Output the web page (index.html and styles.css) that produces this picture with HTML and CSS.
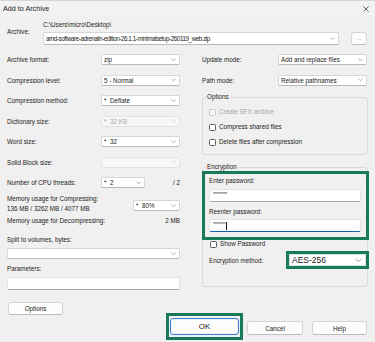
FILE: index.html
```html
<!DOCTYPE html>
<html>
<head>
<meta charset="utf-8">
<link rel="stylesheet" href="styles.css">
</head>
<body>
<div class="window">
  <div class="titlebar">
    <span class="title">Add to Archive</span>
    <svg class="close" viewBox="0 0 6 6"><path d="M0.3 0.3 L5.7 5.7 M5.7 0.3 L0.3 5.7" stroke="#2b2b2b" stroke-width="0.7" fill="none"/></svg>
  </div>

  <div class="archive-row">
    <span class="archive-lbl">Archive:</span>
    <div class="archive-main">
      <div class="path">C:\Users\micro\Desktop\</div>
      <div class="combo big"><span class="val fname">amd-software-adrenalin-edition-26.1.1-minimalsetup-260119_web.zip</span><svg class="chev" viewBox="0 0 6 4"><path d="M0.5 0.8 L3 3.2 L5.5 0.8" fill="none" stroke="#6b6b6b" stroke-width="0.7"/></svg></div>
    </div>
    <div class="btn browse">...</div>
  </div>

  <div class="columns">
    <div class="col left">
      <div class="row"><span class="lbl">Archive format:</span><div class="combo w79"><span>zip</span><svg class="chev" viewBox="0 0 6 4"><path d="M0.5 0.8 L3 3.2 L5.5 0.8" fill="none" stroke="#6b6b6b" stroke-width="0.7"/></svg></div></div>
      <div class="row"><span class="lbl">Compression level:</span><div class="combo w79"><span>5 - Normal</span><svg class="chev" viewBox="0 0 6 4"><path d="M0.5 0.8 L3 3.2 L5.5 0.8" fill="none" stroke="#6b6b6b" stroke-width="0.7"/></svg></div></div>
      <div class="row"><span class="lbl">Compression method:</span><div class="combo w79"><span>*&nbsp; Deflate</span><svg class="chev" viewBox="0 0 6 4"><path d="M0.5 0.8 L3 3.2 L5.5 0.8" fill="none" stroke="#6b6b6b" stroke-width="0.7"/></svg></div></div>
      <div class="row"><span class="lbl">Dictionary size:</span><div class="combo w79 disabled"><span>*&nbsp; 32 KB</span><svg class="chev" viewBox="0 0 6 4"><path d="M0.5 0.8 L3 3.2 L5.5 0.8" fill="none" stroke="#c4c4c4" stroke-width="0.7"/></svg></div></div>
      <div class="row"><span class="lbl">Word size:</span><div class="combo w79"><span>*&nbsp; 32</span><svg class="chev" viewBox="0 0 6 4"><path d="M0.5 0.8 L3 3.2 L5.5 0.8" fill="none" stroke="#6b6b6b" stroke-width="0.7"/></svg></div></div>
      <div class="row"><span class="lbl">Solid Block size:</span><div class="combo w79 disabled"><span></span><svg class="chev" viewBox="0 0 6 4"><path d="M0.5 0.8 L3 3.2 L5.5 0.8" fill="none" stroke="#c4c4c4" stroke-width="0.7"/></svg></div></div>
      <div class="row"><span class="lbl">Number of CPU threads:</span><div class="combo w44"><span>*&nbsp; 2</span><svg class="chev" viewBox="0 0 6 4"><path d="M0.5 0.8 L3 3.2 L5.5 0.8" fill="none" stroke="#6b6b6b" stroke-width="0.7"/></svg></div><span class="right-txt">/ 2</span></div>
      <div class="mem">
        <div class="mem-text">Memory usage for Compressing:<br>136 MB / 3262 MB / 4077 MB</div>
        <div class="combo w47"><span>*&nbsp; 80%</span><svg class="chev" viewBox="0 0 6 4"><path d="M0.5 0.8 L3 3.2 L5.5 0.8" fill="none" stroke="#6b6b6b" stroke-width="0.7"/></svg></div>
      </div>
      <div class="decomp"><span>Memory usage for Decompressing:</span><span>2 MB</span></div>
      <div class="txt split-lbl">Split to volumes, bytes:</div>
      <div class="combo full split-combo"><span></span><svg class="chev" viewBox="0 0 6 4"><path d="M0.5 0.8 L3 3.2 L5.5 0.8" fill="none" stroke="#6b6b6b" stroke-width="0.7"/></svg></div>
      <div class="txt params-lbl">Parameters:</div>
      <div class="input params"></div>
    </div>

    <div class="col right">
      <div class="row"><span class="lbl r">Update mode:</span><div class="combo w89"><span>Add and replace files</span><svg class="chev" viewBox="0 0 6 4"><path d="M0.5 0.8 L3 3.2 L5.5 0.8" fill="none" stroke="#6b6b6b" stroke-width="0.7"/></svg></div></div>
      <div class="row"><span class="lbl r">Path mode:</span><div class="combo w89"><span>Relative pathnames</span><svg class="chev" viewBox="0 0 6 4"><path d="M0.5 0.8 L3 3.2 L5.5 0.8" fill="none" stroke="#6b6b6b" stroke-width="0.7"/></svg></div></div>

      <fieldset class="group options">
        <legend>Options</legend>
        <div class="opt-body">
          <div class="check dis"><span class="cb"></span>Create SFX archive</div>
          <div class="check"><span class="cb"></span>Compress shared files</div>
          <div class="check"><span class="cb"></span>Delete files after compression</div>
        </div>
      </fieldset>

      <fieldset class="group encryption">
        <legend>Encryption</legend>
        <div class="hl pw-box">
          <div class="txt">Enter password:</div>
          <div class="input pw"><span class="stars">********</span></div>
          <div class="txt pw2-lbl">Reenter password:</div>
          <div class="input pw focused"><span class="stars">*******</span><span class="caret"></span></div>
        </div>
        <div class="check show-pw"><span class="cb"></span>Show Password</div>
        <div class="enc-row">
          <span class="enc-lbl">Encryption method:</span>
          <div class="hl enc-wrap">
            <div class="combo enc"><span>AES-256</span><svg class="chev big" viewBox="0 0 6 4"><path d="M0.5 0.8 L3 3.2 L5.5 0.8" fill="none" stroke="#6b6b6b" stroke-width="0.6"/></svg></div>
          </div>
        </div>
      </fieldset>
    </div>
  </div>

  <div class="bottom">
    <div class="btn btn-options">Options</div>
    <div class="hl ok-wrap"><div class="btn btn-ok">OK</div></div>
    <div class="btn btn-cancel">Cancel</div>
    <div class="btn btn-help">Help</div>
  </div>
</div>
</body>
</html>
```

FILE: styles.css
```css
* { box-sizing: border-box; }
html, body { margin: 0; padding: 0; }
body {
  width: 375px;
  height: 342px;
  overflow: hidden;
  background: #f0f0f0;
  font-family: "Liberation Sans", Arial, sans-serif;
  font-size: 6.3px;
  color: #1b1b1b;
}
.window {
  width: 375px;
  height: 342px;
  background: #f0f0f0;
  border-top: 1px solid #d6d6d6;
}
.titlebar {
  height: 15px;
  display: flex;
  align-items: center;
  justify-content: space-between;
  padding: 0 6px 0 3px;
  background: #f2f2f2;
}
.title { font-size: 7.2px; color: #1b1b1b; }
.close { width: 6px; height: 6px; display: block; }

.archive-row {
  display: flex;
  margin-top: 4px;
  padding: 0 8px 0 7px;
}
.archive-lbl { width: 36px; margin-top: 8px; line-height: 8px; }
.archive-main { width: 296px; }
.path { line-height: 10px; margin-bottom: 2px; }
.fname { letter-spacing: -0.45px; }

.combo {
  display: flex;
  align-items: center;
  justify-content: space-between;
  background: #ffffff;
  border: 1px solid #d6d6d6;
  border-bottom-color: #b8b8b8;
  border-radius: 2px;
  padding: 0 3px 0 2px;
  height: 11px;
  white-space: nowrap;
  overflow: hidden;
}
.combo.big { height: 13px; }
.combo.disabled {
  background: #f7f7f7;
  border-color: #e2e2e2;
  color: #a6a6a6;
}
.chev { width: 5px; height: 3.4px; display: block; flex: none; }
.chev.big { width: 7px; height: 4.6px; }

.btn {
  display: flex;
  align-items: center;
  justify-content: center;
  background: #fdfdfd;
  border: 1px solid #d4d4d4;
  border-bottom-color: #bdbdbd;
  border-radius: 3px;
  color: #1b1b1b;
}
.browse {
  width: 16px;
  height: 13px;
  margin-left: 12px;
  margin-top: 12px;
  color: #8a8a8a;
  font-size: 6px;
  line-height: 6px;
  padding-bottom: 2px;
}

.columns {
  display: flex;
  margin-top: 9px;
  padding-left: 7px;
}
.col { display: flex; flex-direction: column; }
.left { width: 173px; }
.right { width: 166px; margin-left: 22px; }

.row {
  display: flex;
  align-items: center;
  height: 11px;
}
.row + .row { margin-top: 9.5px; }
.lbl { width: 94px; flex: none; }
.lbl.r { width: 76px; }
.dis { color: #a6a6a6; }
.w79 { width: 79px; }
.w44 { width: 44px; }
.w47 { width: 47px; }
.w89 { width: 89px; }
.right-txt { margin-left: auto; }

.mem {
  display: flex;
  justify-content: space-between;
  align-items: flex-start;
  margin-top: 6px;
}
.mem-text { line-height: 10px; }
.mem .combo { margin-top: 6px; }
.decomp {
  display: flex;
  justify-content: space-between;
  line-height: 10px;
  margin-top: 2px;
}
.txt { line-height: 10px; }
.split-lbl { margin-top: 9px; }
.split-combo { margin-top: 3px; }
.params-lbl { margin-top: 5px; }
.input {
  background: #ffffff;
  border: 1px solid #e3e3e3;
  border-bottom-color: #a8a8a8;
  border-radius: 2px;
  height: 13px;
}
.params { margin-top: 3px; }

.group {
  margin: 0;
  padding: 0;
  border: 1px solid #d9d9d9;
  border-radius: 3px;
  min-width: 0;
}
.group legend {
  margin-left: 3px;
  padding: 0 1px;
  line-height: 8px;
}
.options { margin-top: 7.5px; }
.opt-body { padding: 6px 0 7px 6px; }
.check {
  display: flex;
  align-items: center;
  line-height: 10px;
}
.check + .check { margin-top: 5px; }
.cb {
  width: 7px;
  height: 7px;
  border: 1px solid #5c5c5c;
  border-radius: 1.5px;
  background: #ffffff;
  margin-right: 3px;
  flex: none;
}
.check.dis .cb { border-color: #c6c6c6; background: #f6f6f6; }

.encryption { margin-top: 8px; padding-bottom: 17px; }
.hl { border: 3px solid #197a5a; }
.pw-box {
  margin: 0 -2px 0 -1px;
  padding: 2px 5px 5px 4px;
}
.pw { margin-top: 3px; display: flex; align-items: center; padding-left: 3px; }
.pw2-lbl { margin-top: 5px; }
.pw2-lbl + .pw { margin-top: 2px; }
.pw.focused { border-bottom: 1.5px solid #1060b8; }
.stars {
  font-size: 5px;
  letter-spacing: -0.2px;
  line-height: 6px;
  margin-top: -4px;
  color: #444;
}
.caret {
  width: 0;
  height: 8px;
  border-left: 1px solid #111;
  margin-left: 1px;
}
.show-pw { line-height: 8px; padding-left: 7px; }
.enc-row {
  display: flex;
  align-items: center;
  margin-top: 3px;
  height: 18px;
}
.enc-lbl { padding-left: 6px; }
.enc-wrap {
  margin-left: auto;
  margin-right: -2px;
  width: 83px;
  height: 18px;
}
.combo.enc {
  height: 12px;
  font-size: 8.5px;
  padding: 0 3px 0 2px;
  border-color: #e0e0e0;
}

.bottom {
  display: flex;
  align-items: flex-start;
  margin-top: 12px;
  padding-left: 8px;
}
.btn-options { width: 55px; height: 13px; }
.ok-wrap {
  margin-left: 103px;
  margin-top: 11px;
  width: 77px;
  height: 27px;
  padding: 2px 1px;
}
.btn-ok {
  height: 17px;
  border: 1px solid #3c7fd0;
  box-shadow: inset 0 0 0 1px #e6f0fb;
  font-size: 8px;
}
.btn-cancel { margin-left: 4px; margin-top: 19px; width: 56px; height: 14px; }
.btn-help { margin-left: 9px; margin-top: 19px; width: 55px; height: 14px; }
```
